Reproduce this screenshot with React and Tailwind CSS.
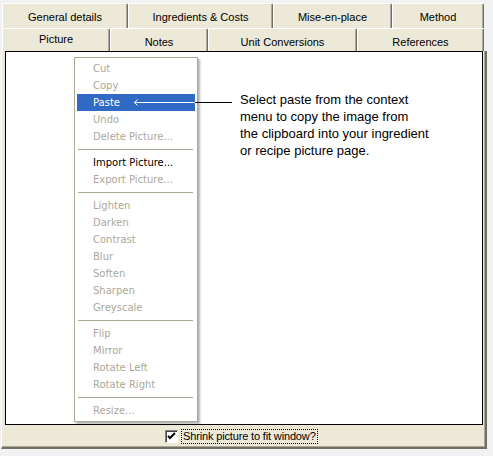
import React from "react";

const row1 = [
  { label: "General details", w: "w-[126px]" },
  { label: "Ingredients & Costs", w: "w-[145px]" },
  { label: "Mise-en-place", w: "w-[119px]" },
  { label: "Method", w: "w-[92px]" },
];

const row2 = [
  { label: "Picture", w: "w-[108px]", active: true },
  { label: "Notes", w: "w-[98px]" },
  { label: "Unit Conversions", w: "w-[149px]" },
  { label: "References", w: "w-[127px]" },
];

// menu entries, "-" is a separator
const menu = [
  { label: "Cut" },
  { label: "Copy" },
  { label: "Paste", active: true },
  { label: "Undo" },
  { label: "Delete Picture..." },
  "-",
  { label: "Import Picture...", enabled: true },
  { label: "Export Picture..." },
  "-",
  { label: "Lighten" },
  { label: "Darken" },
  { label: "Contrast" },
  { label: "Blur" },
  { label: "Soften" },
  { label: "Sharpen" },
  { label: "Greyscale" },
  "-",
  { label: "Flip" },
  { label: "Mirror" },
  { label: "Rotate Left" },
  { label: "Rotate Right" },
  "-",
  { label: "Resize..." },
];

const Tab = ({ label, w, active, row }) => (
  <div
    className={`${w} h-full flex justify-center bg-[#ece9d8] border-t border-l border-white border-r border-r-[#716f64] rounded-t-[2px] shadow-[inset_-1px_0_0_#aca899] text-[11px] text-black ${
      active ? "items-center pb-[1px]" : row === 1 ? "items-center pt-[3px]" : "items-center pt-[4px]"
    }`}
  >
    {label}
  </div>
);

export default function App() {
  return (
    <div className="relative w-[493px] h-[456px] bg-[#f2f2f2] font-['Liberation_Sans',Arial,sans-serif]">
      <div className="w-[487px] h-[449px] flex flex-col">
        {/* TABS */}
        <div className="h-[51px] pt-[3px] pl-[2px] flex flex-col">
          <div className="h-[25px] flex">
            {row1.map((t) => (
              <Tab key={t.label} {...t} row={1} />
            ))}
          </div>
          <div className="h-[23px] flex">
            {row2.map((t) => (
              <Tab key={t.label} {...t} row={2} />
            ))}
          </div>
        </div>

        {/* PAGE */}
        <div className="flex-1 ml-[1px] flex flex-col bg-[#ece9d8] border-l border-white border-r-2 border-b-2 border-r-[#716f64] border-b-[#716f64] shadow-[inset_-1px_-1px_0_#aca899]">
          <div className="relative h-[374px] ml-[3px] mr-[2px] bg-white border border-black">
            {/* context menu */}
            <div className="absolute left-[68px] top-[5px] w-[124px] bg-white border border-[#aca899] p-[2px] shadow-[2px_2px_2px_rgba(0,0,0,0.3)] font-['DejaVu_Sans',Verdana,sans-serif] text-[10px]">
              {menu.map((m, i) =>
                m === "-" ? (
                  <div key={i} className="h-[9px] flex items-center pl-[1px] pr-[2px]">
                    <div className="h-px w-full bg-[#aca899]" />
                  </div>
                ) : (
                  <div
                    key={i}
                    className={`h-[17px] flex items-center pl-[16px] ${
                      m.active
                        ? "bg-[#316ac5] text-white"
                        : m.enabled
                        ? "text-black"
                        : "text-[#aca899]"
                    }`}
                  >
                    {m.label}
                  </div>
                )
              )}
            </div>

            {/* callout */}
            <div className="absolute left-[234px] top-[39px] text-[13px] leading-[17px] text-black">
              Select paste from the context
              <br />
              menu to copy the image from
              <br />
              the clipboard into your ingredient
              <br />
              or recipe picture page.
            </div>
          </div>

          {/* checkbox row */}
          <div className="flex-1 flex items-center pl-[163px]">
            <div className="flex items-center gap-[3px]">
              <div className="w-[13px] h-[13px] bg-white border border-t-[#808080] border-l-[#808080] border-r-white border-b-white shadow-[inset_1px_1px_0_#404040] flex items-center justify-center">
                <svg width="9" height="9" viewBox="0 0 9 9">
                  <path d="M1 4 L3 6 L8 1" stroke="black" strokeWidth="2" fill="none" />
                </svg>
              </div>
              <div className="h-[15px] px-[1px] flex items-center border border-dotted border-black text-[11px] tracking-[-0.15px] text-black leading-none">
                Shrink picture to fit window?
              </div>
            </div>
          </div>
        </div>
      </div>

      {/* arrow from callout to Paste */}
      <svg className="absolute left-0 top-0 pointer-events-none" width="493" height="456">
        <line x1="134" y1="102.5" x2="195" y2="102.5" stroke="white" strokeWidth="1" />
        <line x1="195" y1="102.5" x2="232" y2="102.5" stroke="black" strokeWidth="1" />
        <path d="M137.5 99.5 L134.5 102.5 L137.5 105.5" stroke="white" strokeWidth="1" fill="none" />
      </svg>
    </div>
  );
}
